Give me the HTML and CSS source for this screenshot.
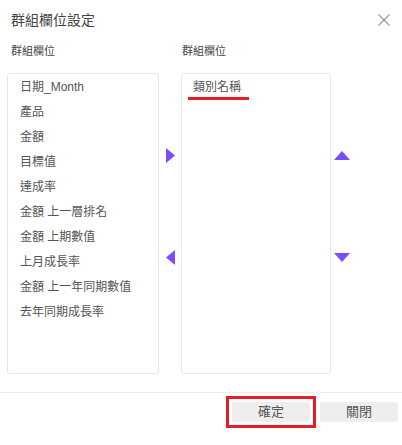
FILE: index.html
```html
<!DOCTYPE html>
<html lang="zh-Hant">
<head>
<meta charset="utf-8">
<title>群組欄位設定</title>
<link rel="stylesheet" href="styles.css">
</head>
<body>
<div class="dialog">
  <div class="header">
    <div class="title">群組欄位設定</div>
    <svg class="close" width="12" height="12" viewBox="0 0 12 12"><path d="M0.5 0.5 L11.5 11.5 M11.5 0.5 L0.5 11.5" stroke="#9a9a9a" stroke-width="1.2" fill="none"/></svg>
  </div>
  <div class="grid">
    <div class="label label-left">群組欄位</div>
    <div></div>
    <div class="label label-right">群組欄位</div>
    <div></div>

    <ul class="box list">
      <li>日期_Month</li>
      <li>產品</li>
      <li>金額</li>
      <li>目標值</li>
      <li>達成率</li>
      <li>金額 上一層排名</li>
      <li>金額 上期數值</li>
      <li>上月成長率</li>
      <li>金額 上一年同期數值</li>
      <li>去年同期成長率</li>
    </ul>
    <div class="move-col">
      <svg class="arrow" width="9" height="15" viewBox="0 0 9 15"><polygon points="0,0 9,7.5 0,15" fill="#7b4dff"/></svg>
      <svg class="arrow arrow-left" width="9" height="15" viewBox="0 0 9 15"><polygon points="9,0 0,7.5 9,15" fill="#7b4dff"/></svg>
    </div>
    <ul class="box list list-right">
      <li><span class="marked">類別名稱</span></li>
    </ul>
    <div class="order-col">
      <svg class="arrow" width="16" height="9" viewBox="0 0 16 9"><polygon points="0,9 8,0 16,9" fill="#7b4dff"/></svg>
      <svg class="arrow arrow-down" width="16" height="9" viewBox="0 0 16 9"><polygon points="0,0 16,0 8,9" fill="#7b4dff"/></svg>
    </div>
  </div>
  <div class="footer">
    <button class="btn btn-ok">確定</button>
    <button class="btn">關閉</button>
  </div>
</div>
</body>
</html>
```
FILE: styles.css
```css
* { box-sizing: border-box; }
html, body { margin: 0; padding: 0; background: #fff; }
body {
  font-family: "Liberation Sans", "Noto Sans CJK TC", sans-serif;
  color: #555;
}
.dialog { width: 402px; height: 445px; }
.header {
  height: 40px;
  display: flex;
  align-items: center;
  justify-content: space-between;
  padding: 0 12px 0 11px;
}
.title { font-size: 14px; color: #444; line-height: 20px; }
.close { display: block; }
.grid {
  display: grid;
  grid-template-columns: 152px 22px 150px 1fr;
  padding-left: 7px;
}
.label {
  font-size: 11px;
  line-height: 22px;
  color: #444;
  margin-bottom: 11px;
}
.label-left { padding-left: 4px; }
.label-right { padding-left: 1px; }
.box {
  height: 301px;
  border: 1px solid #e6e6e6;
  border-radius: 3px;
  margin: 0;
  padding: 1px 0 0 12px;
  list-style: none;
}
.list li {
  font-size: 12px;
  line-height: 25px;
  height: 25px;
  color: #555;
  white-space: nowrap;
}
.list-right { padding-left: 11px; }
.marked { position: relative; display: inline-block; }
.marked::after {
  content: "";
  position: absolute;
  left: -5px;
  width: 61px;
  top: 22px;
  height: 3px;
  background: #e41e26;
}
.move-col {
  display: flex;
  flex-direction: column;
  align-items: center;
  padding-top: 75px;
  padding-left: 1px;
}
.arrow { display: block; }
.arrow-left { margin-top: 87px; }
.order-col {
  display: flex;
  flex-direction: column;
  padding-top: 78px;
  padding-left: 3px;
}
.arrow-down { margin-top: 93px; }
.footer {
  margin-top: 18px;
  border-top: 1px solid #eee;
  padding: 9px 4px 0 0;
  display: flex;
  justify-content: flex-end;
  gap: 10px;
}
.btn {
  width: 78px;
  height: 20px;
  border: none;
  border-radius: 2px;
  background: #eeeeee;
  color: #555;
  font-family: "Liberation Sans", "Noto Sans CJK TC", sans-serif;
  font-size: 13px;
  line-height: 20px;
  padding: 0;
}
.btn-ok { position: relative; }
.btn-ok::after {
  content: "";
  position: absolute;
  left: -6px;
  right: -6px;
  top: -6px;
  bottom: -6px;
  border: 3px solid #e41e26;
}
```
